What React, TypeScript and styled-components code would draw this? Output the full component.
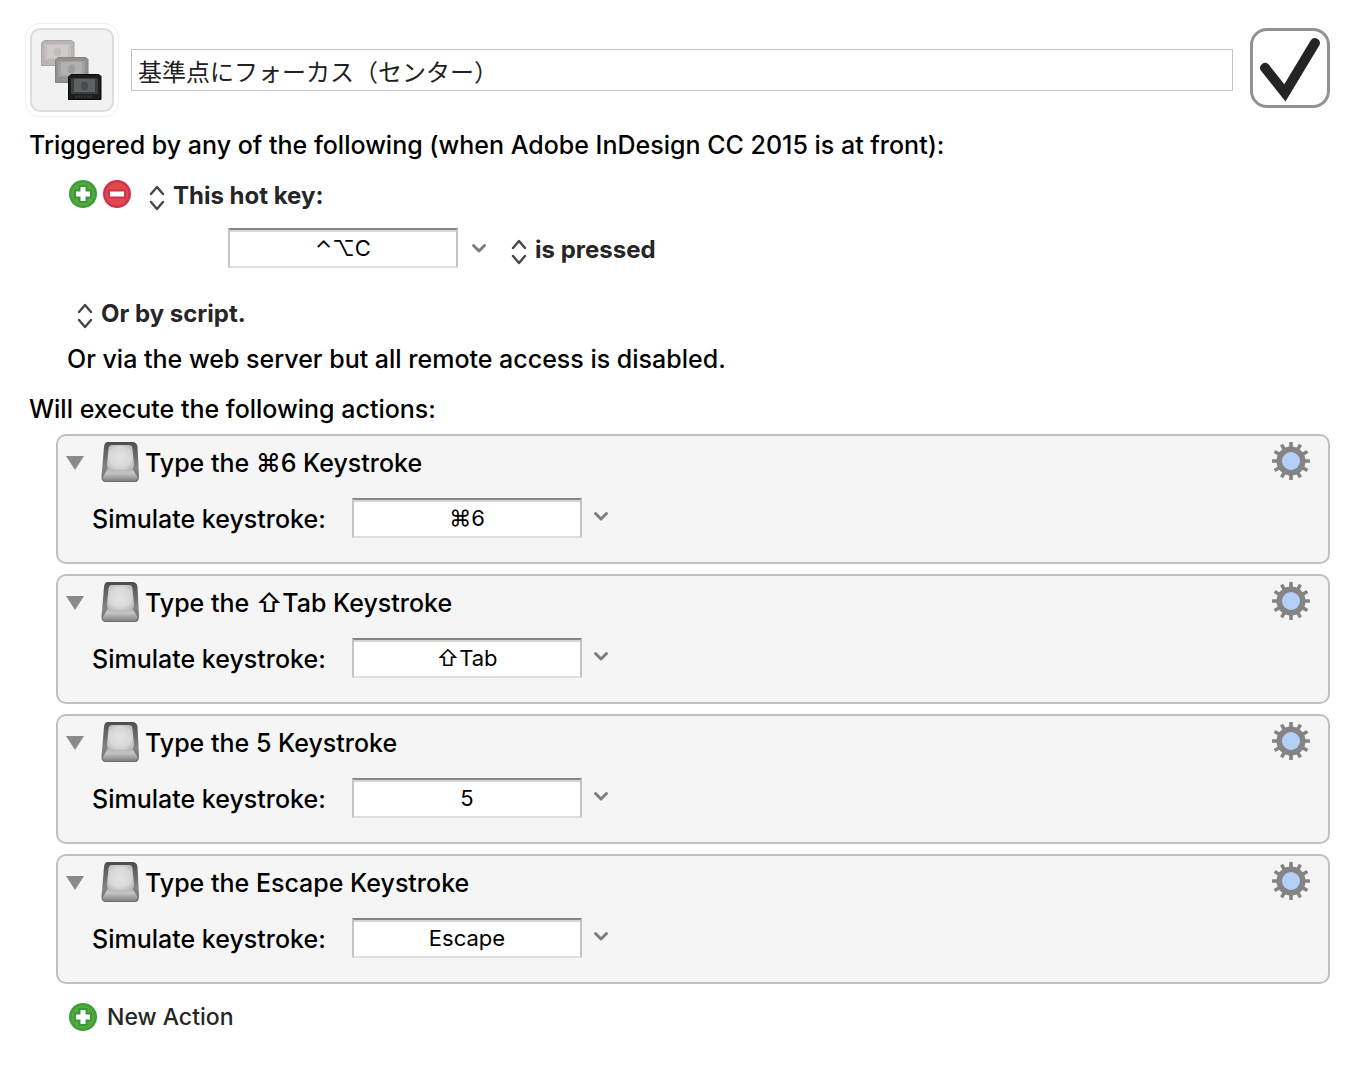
import React, { useId, useState } from "react";
import styled, { createGlobalStyle } from "styled-components";

const GlobalStyle = createGlobalStyle`
  *, *::before, *::after { box-sizing: border-box; }
  body {
    margin: 0;
    background: #fff;
    color: #000;
    font-family: Inter, "Noto Sans CJK JP", "DejaVu Sans", sans-serif;
    font-size: 25px;
    font-weight: 500;
    line-height: 32px;
  }
  input, select, button { font: inherit; color: inherit; margin: 0; }
`;

const Page = styled.main`
  padding: 24px 34px 40px 26px;
`;

const Header = styled.header`
  display: flex;
  align-items: center;
  gap: 13px;
`;

const MacroIcon = styled.button`
  flex: none;
  width: 94px;
  height: 94px;
  margin: -1px;
  padding: 4px;
  border: 1px solid #efefef;
  border-radius: 14px;
  background: #fff;
  svg { display: block; }
`;

const NameInput = styled.input`
  flex: 1;
  min-width: 0;
  height: 42px;
  padding: 0 6px;
  border: 1px solid #c3c3c3;
  background: #fff;
  font-family: "Noto Sans CJK JP", sans-serif;
  font-size: 24px;
  font-weight: 400;
  color: #222;
`;

const EnabledToggle = styled.span`
  flex: none;
  display: grid;
  margin: 0 0 4px 4px;
  > * { grid-area: 1 / 1; }
  svg { pointer-events: none; }
`;

const EnabledBox = styled.input`
  appearance: none;
  width: 80px;
  height: 80px;
  border: 3px solid #929292;
  border-radius: 17px;
  background: #fff;
  &:not(:checked) + svg { visibility: hidden; }
`;

const Heading = styled.h2<{ $top: number }>`
  margin: ${(p) => p.$top}px 0 0 3px;
  font-size: inherit;
  font-weight: inherit;
`;

const TriggerList = styled.section`
  padding-left: 41px;
`;

const TriggerRow = styled.div<{ $top: number; $indent?: number }>`
  display: flex;
  align-items: center;
  margin-top: ${(p) => p.$top}px;
  padding-left: ${(p) => p.$indent ?? 0}px;
`;

const IconButton = styled.button<{ $gap?: number }>`
  flex: none;
  display: flex;
  padding: 0;
  border: 0;
  background: none;
  margin-right: ${(p) => p.$gap ?? 0}px;
`;

const Popup = styled.label`
  display: flex;
  align-items: center;
  gap: 8px;
  padding-top: 4px;
  color: #262626;
  svg { margin-top: 4px; }
`;

const PopupSelect = styled.select`
  appearance: none;
  height: 32px;
  padding: 0;
  border: 0;
  background: none;
  font-weight: 700;
  font-size: 24px;
`;

const Note = styled.p`
  margin: 13px 0 0;
`;

const KeyField = styled.input`
  width: 230px;
  height: 40px;
  padding: 0 4px;
  border: 2px solid;
  border-color: #868686 #c4c4c4 #dedede #c4c4c4;
  background: #fff;
  box-shadow: inset 0 2px 0 #d6d6d6;
  text-align: center;
  font-size: 22px;
  font-weight: 400;
`;

const ChevronButton = styled(IconButton)`
  margin-left: 13px;
`;

const ActionList = styled.ol`
  list-style: none;
  margin: 9px 0 0 30px;
  padding: 0;
  display: flex;
  flex-direction: column;
  gap: 10px;
`;

const Card = styled.li`
  padding: 6px 18px 24px 8px;
  border: 2px solid #c0c0c0;
  border-radius: 10px;
  background: #f5f5f5;
`;

const CardHead = styled.div`
  display: flex;
  height: 40px;
`;

const Toggle = styled(IconButton)`
  align-self: center;
  padding-top: 2px;
`;

const CardTitle = styled.h3`
  flex: 1;
  margin: 5px 0 0 6px;
  font-size: inherit;
  font-weight: inherit;
`;

const CardBody = styled.div`
  display: flex;
  align-items: center;
  margin-top: 16px;
  padding-left: 26px;
  ${ChevronButton} { margin: 0 0 4px 11px; }
`;

const FieldLabel = styled.label`
  width: 260px;
  padding-top: 2px;
`;

const NewAction = styled.button`
  display: flex;
  align-items: center;
  gap: 10px;
  margin: 17px 0 0 43px;
  padding: 0;
  border: 0;
  background: none;
  font-size: 23px;
  color: #262626;
`;

const stack = [
  { x: 11, y: 12, body: "#b9b5b3", rim: "#aaa6a4", screen: "#d0cccb", dot: "#c0bcbb" },
  { x: 25, y: 29, body: "#939190", rim: "#858382", screen: "#b3b2b1", dot: "#9f9e9e" },
  { x: 38, y: 46, body: "#1c1e1e", rim: "#0a0a0a", screen: "#626566", dot: "#484b4c" },
];

function StackedScreens() {
  return (
    <svg width="84" height="84" viewBox="0 0 84 84" aria-hidden="true">
      <rect x="1" y="1" width="82" height="82" rx="9" fill="#f2f2f2" stroke="#dcdcdc" strokeWidth="2" />
      {stack.map((s) => (
        <g key={s.x} transform={`translate(${s.x} ${s.y})`}>
          <path d="M3 .5h28l2 2v23H.5V3z" fill={s.body} stroke={s.rim} />
          <rect x="3" y="4" width="27" height="16" fill={s.screen} opacity=".45" />
          <rect x="6" y="5" width="21" height="13" fill={s.screen} opacity=".9" />
          <ellipse cx="16.500" cy="12" rx="3.5" ry="4.5" fill={s.dot} />
          <path d="M7 22.5h18" stroke={s.screen} strokeWidth="2" strokeDasharray="2 1" opacity=".4" />
        </g>
      ))}
    </svg>
  );
}

function CheckMark() {
  return (
    <svg width="80" height="80" viewBox="0 0 80 80" aria-hidden="true">
      <path d="M11 42.8A5 5 0 0 1 18.8 36.6L34.3 56.3 60.8 12.2A5 5 0 0 1 69.4 17.2L35.5 73.5Z" fill="#242424" />
    </svg>
  );
}

function RoundIcon({ kind }: { kind: "plus" | "minus" }) {
  const plus = kind === "plus";
  return (
    <svg width="28" height="28" viewBox="0 0 28 28" aria-hidden="true">
      <circle cx="14" cy="14" r="14" fill={plus ? "#3a9f3c" : "#d62f50"} />
      <circle cx="14" cy="14" r="11.5" fill={plus ? "#58a83a" : "#de4b4b"} />
      <path d={plus ? "M14 5v18M5 14h18" : "M5 14h18"} stroke={plus ? "#35983a" : "#d62f50"} strokeWidth="9" />
      <path d={plus ? "M14 7v14M7 14h14" : "M7 14h14"} stroke="#fff" strokeWidth="5" />
    </svg>
  );
}

function UpDown() {
  return (
    <svg width="16" height="26" viewBox="0 0 16 26" fill="none" stroke="#474747" strokeWidth="2.4" strokeLinecap="round" strokeLinejoin="round" aria-hidden="true">
      <path d="M2 9l6-7 6 7M2 17l6 7 6-7" />
    </svg>
  );
}

function ChevronDown() {
  return (
    <svg width="16" height="12" viewBox="0 0 16 12" fill="none" stroke="#7e7e7e" strokeWidth="3" strokeLinecap="round" strokeLinejoin="round" aria-hidden="true">
      <path d="M2.500 3.500l5.500 5.500 5.500-5.500" />
    </svg>
  );
}

function KeyCap() {
  const id = useId();
  return (
    <svg width="38" height="40" viewBox="0 0 38 40" aria-hidden="true">
      <defs>
        <linearGradient id={`${id}b`} x1="0" y1="0" x2="0" y2="1">
          <stop offset="0" stopColor="#4c4c4c" />
          <stop offset=".65" stopColor="#858585" />
          <stop offset="1" stopColor="#6c6c6c" />
        </linearGradient>
        <linearGradient id={`${id}f`} x1="0" y1="0" x2="0" y2="1">
          <stop offset="0" stopColor="#b4b4b4" />
          <stop offset=".4" stopColor="#c4c4c4" />
          <stop offset="1" stopColor="#808080" />
        </linearGradient>
        <radialGradient id={`${id}t`} cx=".48" cy=".5" r=".65">
          <stop offset="0" stopColor="#e4e4e4" />
          <stop offset=".6" stopColor="#d8d8d8" />
          <stop offset="1" stopColor="#b4b4b4" />
        </radialGradient>
      </defs>
      <path d="M7 0h24q5 0 5.500 5L38 34q0 6-4 6H5q-5 0-4.500-6L3 5Q3.500 0 7 0z" fill={`url(#${id}b)`} />
      <path d="M7 26h24l5.500 9q0 4-4 4H5q-4 0-3-4z" fill={`url(#${id}f)`} />
      <path d="M11 3h17q3 0 3.500 3l1.500 17q0 5-5 5H11q-5 0-5-5L7.500 6Q8 3 11 3z" fill={`url(#${id}t)`} />
    </svg>
  );
}

function Disclosure() {
  return (
    <svg width="18" height="14" viewBox="0 0 18 14" aria-hidden="true">
      <path d="M0 0h18L9 14z" fill="#8a8a8a" />
    </svg>
  );
}

function Gear() {
  const teeth = Array.from({ length: 12 }, (_, i) => i * 30);
  return (
    <svg width="38" height="38" viewBox="0 0 38 38" aria-hidden="true">
      {teeth.map((a) => (
        <rect key={a} x="17.200" y="0" width="3.600" height="8" rx=".6" fill="#848484" transform={`rotate(${a} 19 19)`} />
      ))}
      <circle cx="19" cy="19" r="14.500" fill="#848484" />
      <circle cx="19" cy="19" r="9" fill="#b3cff6" />
    </svg>
  );
}

function PopupMenu({ name, value }: { name: string; value: string }) {
  return (
    <Popup>
      <UpDown />
      <PopupSelect aria-label={name} defaultValue={value}>
        <option>{value}</option>
      </PopupSelect>
    </Popup>
  );
}

function ActionCard({ keys }: { keys: string }) {
  const id = useId();
  const [open, setOpen] = useState(true);
  return (
    <Card>
      <CardHead>
        <Toggle $gap={17} aria-label="Toggle details" aria-expanded={open} onClick={() => setOpen(!open)}>
          <Disclosure />
        </Toggle>
        <KeyCap />
        <CardTitle>Type the {keys} Keystroke</CardTitle>
        <IconButton aria-label="Action options">
          <Gear />
        </IconButton>
      </CardHead>
      {open && (
        <CardBody>
          <FieldLabel htmlFor={id}>Simulate keystroke:</FieldLabel>
          <KeyField id={id} defaultValue={keys} />
          <ChevronButton aria-label="Choose key">
            <ChevronDown />
          </ChevronButton>
        </CardBody>
      )}
    </Card>
  );
}

const actions = ["⌘6", "⇧Tab", "5", "Escape"];

export default function App() {
  return (
    <>
      <GlobalStyle />
      <Page>
        <Header>
          <MacroIcon aria-label="Macro icon">
            <StackedScreens />
          </MacroIcon>
          <NameInput aria-label="Macro name" defaultValue="基準点にフォーカス（センター）" />
          <EnabledToggle>
            <EnabledBox type="checkbox" aria-label="Macro enabled" defaultChecked />
            <CheckMark />
          </EnabledToggle>
        </Header>

        <Heading $top={13}>Triggered by any of the following (when Adobe InDesign CC 2015 is at front):</Heading>
        <TriggerList>
          <TriggerRow $top={15} $indent={2}>
            <IconButton $gap={6} aria-label="Add trigger">
              <RoundIcon kind="plus" />
            </IconButton>
            <IconButton $gap={18} aria-label="Remove trigger">
              <RoundIcon kind="minus" />
            </IconButton>
            <PopupMenu name="Trigger type" value="This hot key:" />
          </TriggerRow>
          <TriggerRow $top={16} $indent={161}>
            <KeyField aria-label="Hot key" defaultValue="⌃⌥C" />
            <ChevronButton $gap={24} aria-label="Choose key">
              <ChevronDown />
            </ChevronButton>
            <PopupMenu name="Hot key event" value="is pressed" />
          </TriggerRow>
          <TriggerRow $top={26} $indent={10}>
            <PopupMenu name="Script trigger" value="Or by script." />
          </TriggerRow>
          <Note>Or via the web server but all remote access is disabled.</Note>
        </TriggerList>

        <Heading $top={18}>Will execute the following actions:</Heading>
        <ActionList>
          {actions.map((keys) => (
            <ActionCard key={keys} keys={keys} />
          ))}
        </ActionList>
        <NewAction>
          <RoundIcon kind="plus" />
          New Action
        </NewAction>
      </Page>
    </>
  );
}
